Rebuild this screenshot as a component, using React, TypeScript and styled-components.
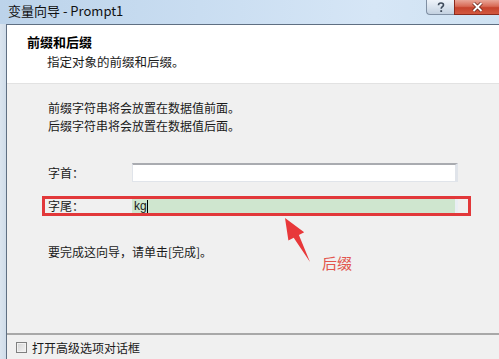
import styled, { createGlobalStyle } from "styled-components";

const GlobalStyle = createGlobalStyle`
  html, body {
    margin: 0;
    padding: 0;
    background: #f0f0f0;
  }
  * {
    box-sizing: border-box;
  }
`;

const Window = styled.div`
  position: relative;
  width: 499px;
  height: 359px;
  display: flex;
  flex-direction: column;
  overflow: hidden;
  background: #f0f0f0;
  font-family: "Noto Sans CJK SC", "Liberation Sans", sans-serif;
  color: #1a1a1a;
`;

const TitleBar = styled.div`
  height: 24px;
  flex-shrink: 0;
  display: flex;
  align-items: flex-start;
  justify-content: space-between;
  background: linear-gradient(90deg, #bcd3ea 0%, #c9ddf1 40%, #d6e6f6 75%, #cfe2f2 100%);
`;

const Title = styled.div`
  padding: 2px 0 0 8px;
  font-size: 13px;
  line-height: 17px;
  color: #111;
`;

const Controls = styled.div`
  display: flex;
  height: 15px;
`;

const HelpButton = styled.div`
  width: 28px;
  height: 15px;
  display: flex;
  align-items: center;
  justify-content: center;
  border: 1px solid #7f8fa3;
  border-top: none;
  border-right: none;
  border-bottom-left-radius: 4px;
  background: linear-gradient(180deg, #eef3f9 0%, #d9e3ee 50%, #c3d1e0 100%);
`;

const CloseButton = styled.div`
  width: 45px;
  height: 15px;
  display: flex;
  align-items: center;
  justify-content: center;
  border-bottom: 1px solid #8b2a1c;
  border-left: 1px solid #8b2a1c;
  background: linear-gradient(180deg, #e9a698 0%, #d86a55 45%, #c6432c 55%, #d2583f 100%);
`;

const Frame = styled.div`
  flex: 1;
  display: flex;
  min-height: 0;
`;

const FrameEdge = styled.div`
  width: 6px;
  flex-shrink: 0;
  background: linear-gradient(90deg, #dbe5ef 0%, #cfdce9 100%);
`;

const Client = styled.div`
  flex: 1;
  display: flex;
  flex-direction: column;
  border-top: 1px solid #5f6f82;
  border-left: 1px solid #5f6f82;
  background: #f0f0f0;
`;

const Header = styled.div`
  height: 59px;
  flex-shrink: 0;
  padding: 8px 0 0 20px;
  background: #ffffff;
  border-bottom: 1px solid #e2e2e2;
`;

const HeaderTitle = styled.div`
  font-size: 13px;
  font-weight: 700;
  line-height: 18px;
  color: #000;
`;

const HeaderSub = styled.div`
  margin-top: 2px;
  padding-left: 20px;
  font-size: 12.5px;
  line-height: 18px;
`;

const Content = styled.div`
  flex: 1;
  padding: 15px 0 0 35px;
`;

const Text = styled.div<{ $gap?: number }>`
  margin: ${({ $gap }) => $gap ?? 0}px 0 0 6px;
  font-size: 12px;
  line-height: 18px;
`;

const FieldRow = styled.div<{ $highlight?: boolean; $gap: number }>`
  width: 429px;
  margin-top: ${({ $gap }) => $gap}px;
  display: flex;
  align-items: center;
  padding-left: 3px;
  border: 3px solid ${({ $highlight }) => ($highlight ? "#e2383a" : "transparent")};
`;

const Label = styled.div`
  width: 84px;
  font-size: 12px;
  line-height: 14px;
`;

const Input = styled.div<{ $highlight?: boolean }>`
  width: 326px;
  height: ${({ $highlight }) => ($highlight ? 14 : 19)}px;
  display: flex;
  align-items: center;
  padding-left: 2px;
  font-family: "Liberation Sans", sans-serif;
  font-size: 12px;
  background: ${({ $highlight }) => ($highlight ? "#cfe6cf" : "#ffffff")};
  border: ${({ $highlight }) => ($highlight ? "none" : "1px solid #e0e4ea")};
  border-top: ${({ $highlight }) => ($highlight ? "none" : "2px solid #a9abb0")};
  border-right: 3px solid ${({ $highlight }) => ($highlight ? "#e9eef3" : "#e0e4ea")};
`;

const Caret = styled.span`
  display: inline-block;
  width: 1px;
  height: 13px;
  background: #000;
`;

const Footer = styled.div`
  height: 26px;
  flex-shrink: 0;
  display: flex;
  align-items: center;
  gap: 5px;
  padding-left: 9px;
  border-top: 2px solid #a8a8a8;
  font-size: 12px;
`;

const CheckBox = styled.span`
  width: 11px;
  height: 11px;
  border: 1px solid #7f8080;
  background: linear-gradient(135deg, #d4d4d4 0%, #f4f4f4 100%);
  box-shadow: inset 0 0 0 1px #f2f2f2;
`;

const Arrow = styled.svg`
  position: absolute;
  left: 280px;
  top: 210px;
`;

const Note = styled.div`
  position: absolute;
  left: 322px;
  top: 253px;
  font-size: 15px;
  line-height: 20px;
  color: #e2544c;
`;

export default function App() {
  return (
    <>
      <GlobalStyle />
      <Window>
        <TitleBar>
          <Title>变量向导 - Prompt1</Title>
          <Controls>
            <HelpButton>
              <svg width="8" height="11" viewBox="0 0 8 11">
                <path
                  d="M1.5 3.2 C1.5 1.5 2.6 1 4 1 C5.5 1 6.5 1.8 6.5 3 C6.5 4.6 4.2 4.8 4.2 6.8"
                  fill="none"
                  stroke="#3d4a5a"
                  strokeWidth="1.6"
                />
                <rect x="3.3" y="8.2" width="1.8" height="1.8" fill="#3d4a5a" />
              </svg>
            </HelpButton>
            <CloseButton>
              <svg width="11" height="10" viewBox="0 0 11 10">
                <path d="M1.5 1 L9.5 9 M9.5 1 L1.5 9" stroke="#5a1a10" strokeWidth="3.4" />
                <path d="M1.5 1 L9.5 9 M9.5 1 L1.5 9" stroke="#ffffff" strokeWidth="2" />
              </svg>
            </CloseButton>
          </Controls>
        </TitleBar>
        <Frame>
          <FrameEdge />
          <Client>
            <Header>
              <HeaderTitle>前缀和后缀</HeaderTitle>
              <HeaderSub>指定对象的前缀和后缀。</HeaderSub>
            </Header>
            <Content>
              <Text>前缀字符串将会放置在数据值前面。</Text>
              <Text>后缀字符串将会放置在数据值后面。</Text>
              <FieldRow $gap={25}>
                <Label>字首：</Label>
                <Input />
              </FieldRow>
              <FieldRow $gap={11} $highlight>
                <Label>字尾：</Label>
                <Input $highlight>
                  kg
                  <Caret />
                </Input>
              </FieldRow>
              <Text $gap={27}>要完成这向导，请单击[完成]。</Text>
            </Content>
            <Footer>
              <CheckBox />
              <span>打开高级选项对话框</span>
            </Footer>
          </Client>
        </Frame>
        <Arrow width="40" height="60" viewBox="0 0 40 60">
          <polygon
            points="5,8 24.2,22.2 18.9,25 30,52 13.7,27.8 8.4,30.6"
            fill="#e8383a"
          />
        </Arrow>
        <Note>后缀</Note>
      </Window>
    </>
  );
}
